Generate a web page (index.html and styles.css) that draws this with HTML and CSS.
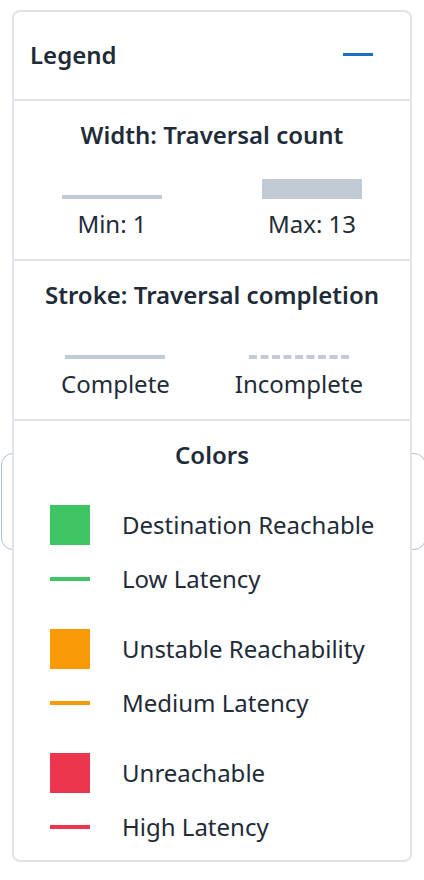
FILE: index.html
```html
<!DOCTYPE html>
<html lang="en">
<head>
<meta charset="utf-8">
<title>Legend</title>
<link rel="stylesheet" href="styles.css">
</head>
<body>
<div class="backdrop-box"></div>
<section class="legend">
  <header class="legend-header">
    <h2 class="legend-title">Legend</h2>
    <button class="collapse-btn" aria-label="Collapse legend"><span class="collapse-bar"></span></button>
  </header>

  <div class="legend-section">
    <h3 class="section-title">Width: Traversal count</h3>
    <div class="pair pair-width">
      <div class="pair-item">
        <div class="sample-area"><span class="bar bar-min"></span></div>
        <span class="pair-label">Min: 1</span>
      </div>
      <div class="pair-item">
        <div class="sample-area"><span class="bar bar-max"></span></div>
        <span class="pair-label">Max: 13</span>
      </div>
    </div>
  </div>

  <div class="legend-section">
    <h3 class="section-title">Stroke: Traversal completion</h3>
    <div class="pair pair-stroke">
      <div class="pair-item">
        <div class="sample-area"><span class="bar bar-min"></span></div>
        <span class="pair-label">Complete</span>
      </div>
      <div class="pair-item">
        <div class="sample-area">
          <svg class="dashed" width="100" height="4" viewBox="0 0 100 4"><line x1="0" y1="2" x2="100" y2="2" stroke="#c3ccd6" stroke-width="4" stroke-dasharray="8 3.5"/></svg>
        </div>
        <span class="pair-label">Incomplete</span>
      </div>
    </div>
  </div>

  <div class="legend-section colors-section">
    <h3 class="section-title">Colors</h3>
    <ul class="color-list">
      <li class="color-group">
        <div class="color-row"><span class="swatch swatch-square green"></span><span class="color-label">Destination Reachable</span></div>
        <div class="color-row"><span class="swatch swatch-line green"></span><span class="color-label">Low Latency</span></div>
      </li>
      <li class="color-group">
        <div class="color-row"><span class="swatch swatch-square orange"></span><span class="color-label">Unstable Reachability</span></div>
        <div class="color-row"><span class="swatch swatch-line orange"></span><span class="color-label">Medium Latency</span></div>
      </li>
      <li class="color-group">
        <div class="color-row"><span class="swatch swatch-square red"></span><span class="color-label">Unreachable</span></div>
        <div class="color-row"><span class="swatch swatch-line red"></span><span class="color-label">High Latency</span></div>
      </li>
    </ul>
  </div>
</section>
</body>
</html>
```

FILE: styles.css
```css
* { box-sizing: border-box; }

html, body {
  margin: 0;
  padding: 0;
  background: #ffffff;
  overflow: hidden;
}

body {
  position: relative;
  font-family: "Noto Sans", "Open Sans", sans-serif;
  color: #1e2b38;
  padding: 10px 12px;
  min-height: 880px;
}

.backdrop-box {
  position: absolute;
  left: 1px;
  top: 453px;
  width: 425px;
  height: 97px;
  border: 1.5px solid #b4c0cd;
  border-radius: 12px;
  z-index: 0;
}

.legend {
  position: relative;
  z-index: 1;
  width: 400px;
  background: #ffffff;
  border: 2px solid #e0e3ea;
  border-radius: 8px;
}

.legend-header {
  height: 89px;
  display: flex;
  align-items: center;
  justify-content: space-between;
  padding: 0 37px 0 16px;
  border-bottom: 2px solid #e0e3ea;
}

.legend-title {
  margin: 0 0 1px;
  font-size: 24px;
  line-height: 32px;
  font-weight: 600;
}

.collapse-btn {
  border: 0;
  background: transparent;
  padding: 0;
  width: 30px;
  height: 12px;
  display: flex;
  align-items: center;
  margin-bottom: 2px;
}

.collapse-bar {
  display: block;
  width: 30px;
  height: 3px;
  background: #1b6ec2;
}

.legend-section {
  padding: 18px 0 19px;
  border-bottom: 2px solid #e0e3ea;
}

.section-title {
  margin: 0;
  font-size: 24px;
  line-height: 32px;
  font-weight: 600;
  text-align: center;
}

.pair {
  display: flex;
  justify-content: center;
  margin-top: 28px;
}

.pair-width { gap: 100px; }
.pair-stroke { gap: 65px; }

.pair-item {
  display: flex;
  flex-direction: column;
  align-items: center;
  gap: 9px;
}

.sample-area {
  height: 20px;
  width: 100px;
  display: flex;
  align-items: flex-end;
}

.bar {
  display: block;
  width: 100px;
  background: #c1cad5;
}

.bar-min { height: 4px; }
.bar-max { height: 20px; }

.dashed { display: block; }

.pair-label {
  font-size: 24px;
  line-height: 32px;
  font-weight: 400;
  white-space: nowrap;
}

.colors-section {
  border-bottom: 0;
  padding-bottom: 13px;
}

.color-list {
  list-style: none;
  margin: 34px 0 0;
  padding: 0 0 0 36px;
  display: flex;
  flex-direction: column;
  gap: 30px;
}

.color-group {
  display: flex;
  flex-direction: column;
  gap: 14px;
}

.color-row {
  height: 40px;
  display: flex;
  align-items: center;
  gap: 32px;
}

.swatch {
  display: block;
  width: 40px;
  flex: none;
}

.swatch-square { height: 40px; }
.swatch-line { height: 4px; }

.green { background: #3fc463; }
.orange { background: #f99b06; }
.red { background: #ed364e; }

.color-label {
  font-size: 24px;
  line-height: 32px;
  white-space: nowrap;
}
```
